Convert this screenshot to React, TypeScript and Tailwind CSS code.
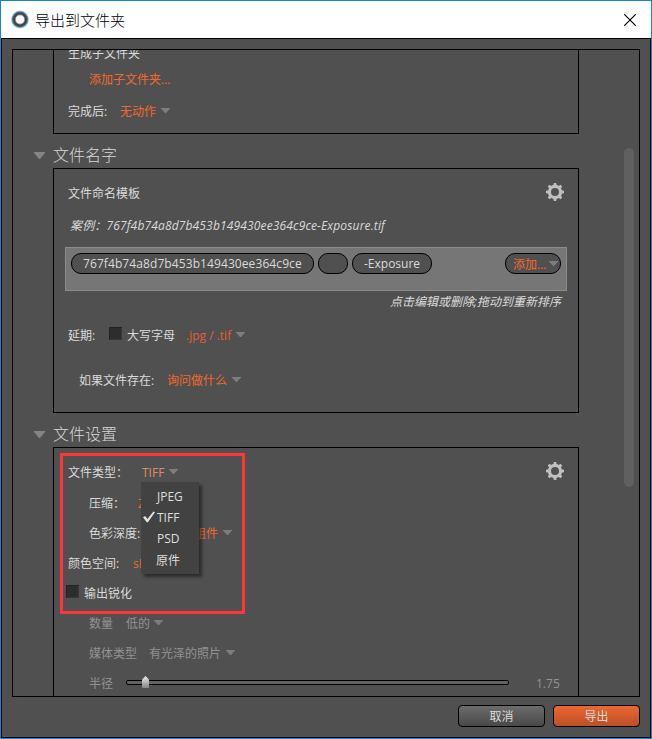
import type { ReactNode } from "react";

function Arrow({ className = "mb-[3px]" }: { className?: string }) {
  return (
    <svg className={`shrink-0 ${className}`} width="9" height="5" viewBox="0 0 9 5">
      <path d="M0 0H9V0.6L5 5H4L0 0.6Z" fill="#7d7d7d" />
    </svg>
  );
}

function Gear() {
  return (
    <svg className="mb-1 shrink-0" width="18" height="18" viewBox="-9 -9 18 18">
      <circle r="5.6" fill="none" stroke="#c0c0c0" strokeWidth="3.2" />
      {[0, 45, 90, 135, 180, 225, 270, 315].map((a) => (
        <path key={a} d="M-1.7 -6L-1.2 -9H1.2L1.7 -6Z" fill="#c0c0c0" transform={`rotate(${a})`} />
      ))}
    </svg>
  );
}

function Checkbox() {
  return (
    <span className="mb-[5px] h-[13px] w-[13px] shrink-0 border-t border-l border-[#222] bg-[#2d2d2d] shadow-[inset_-1px_-1px_1px_#3a3a3a]" />
  );
}

function Row({ className = "", children }: { className?: string; children: ReactNode }) {
  return <div className={`flex items-center ${className}`}>{children}</div>;
}

function Heading({ children }: { children: ReactNode }) {
  return (
    <div className="flex h-[34px] shrink-0 items-center pt-2 pl-[21px]">
      <svg width="11" height="7" viewBox="0 0 11 7" className="mr-[8px] shrink-0">
        <path d="M0 0H11V1L6 7H5L0 1Z" fill="#848484" />
      </svg>
      <h2 className="text-[16px] leading-[20px] font-light text-[#d8d8d8]">{children}</h2>
    </div>
  );
}

function Pill({ className = "", children }: { className?: string; children?: ReactNode }) {
  return (
    <div
      className={`flex h-[21px] shrink-0 items-center rounded-[10px] border border-black bg-[#505050] ${className}`}
    >
      {children}
    </div>
  );
}

function FormatMenu() {
  return (
    <div className="absolute top-[34px] left-[87px] flex h-[92px] w-[58px] flex-col bg-[#424242] pt-1 text-[#dedede] shadow-[3px_3px_3px_rgba(0,0,0,0.45)]">
      <div className="flex h-[21px] items-center pl-4">JPEG</div>
      <div className="flex h-[21px] items-center pl-[2px]">
        <svg width="12" height="12" viewBox="0 0 12 12" className="mr-[2px] mb-[2px]">
          <path d="M0 6.3L2.2 5L4.4 8L10.4 0.6L12 1.3L4.9 11.3H3.7Z" fill="#e2e2e2" />
        </svg>
        TIFF
      </div>
      <div className="flex h-[21px] items-center pl-4">PSD</div>
      <div className="flex h-[22px] items-center pt-[2px] pl-[15px]">原件</div>
    </div>
  );
}

export default function App() {
  return (
    <div className="relative flex h-[739px] w-[652px] flex-col overflow-hidden border border-[#1883d7] bg-[#505050] font-['Open_Sans','Noto_Sans_CJK_SC',sans-serif] text-[12px] leading-[16px] whitespace-nowrap text-[#dadada]">
      <header className="flex h-[37px] shrink-0 items-center bg-white pr-[15px] pl-[10px]">
        <svg width="18" height="19" viewBox="0 0 18 19">
          <circle cx="9" cy="9.5" r="8.9" fill="#8fcbe0" />
          <circle cx="9" cy="9.5" r="7.9" fill="#4f6f7c" />
          <circle cx="9" cy="9.5" r="6.9" fill="#454247" />
          <circle cx="9" cy="9.5" r="4.9" fill="#aaa8a9" />
          <circle cx="9" cy="9.5" r="4" fill="#fff" />
        </svg>
        <h1 className="ml-[6px] text-[15px] leading-[20px] font-light text-black">导出到文件夹</h1>
        <svg className="ml-auto" width="12" height="12" viewBox="0 0 12 12">
          <path d="M0.3 0.3L11.7 11.7M11.7 0.3L0.3 11.7" stroke="#000" strokeWidth="1.1" />
        </svg>
      </header>

      <div className="flex min-h-0 flex-1 flex-col border border-black px-[10px] pt-[10px]">
        <main className="flex h-[648px] w-[628px] shrink-0 overflow-hidden border border-black">
          <div className="flex w-[566px] shrink-0 flex-col">
            <section className="ml-10 h-[84px] shrink-0 overflow-hidden border border-t-0 border-black pl-[14px]">
              <Row className="-mt-2 h-6">生成子文件夹</Row>
              <Row className="h-[26px] pt-[2px] pl-[21px] text-[#f2682c]">添加子文件夹...</Row>
              <Row className="h-[38px] pt-[2px]">
                <span className="w-[52px]">完成后:</span>
                <span className="w-10 text-[#f2682c]">无动作</span>
                <Arrow className="mb-[3px] ml-px" />
              </Row>
            </section>

            <Heading>文件名字</Heading>
            <section className="ml-10 h-[245px] shrink-0 border border-black">
              <Row className="h-12 justify-between px-[14px] pt-[2px]">
                <span>文件命名模板</span>
                <Gear />
              </Row>
              <Row className="h-[18px] pl-4 tracking-[0.15px] italic">
                案例：767f4b74a8d7b453b149430ee364c9ce-Exposure.tif
              </Row>
              <div className="mt-3 ml-[11px] flex h-11 w-[502px] items-start border border-[#8b8b8b] bg-[#767676] px-[5px] pt-[5px]">
                <Pill className="w-[243px] pl-[11px] tracking-[0.09px]">
                  767f4b74a8d7b453b149430ee364c9ce
                </Pill>
                <Pill className="ml-1 w-[30px]" />
                <Pill className="ml-1 w-[80px] pl-[11px]">-Exposure</Pill>
                <Pill className="ml-auto w-[56px] pt-[2px] pl-[7px] text-[#f2682c]">
                  <span className="w-9">添加...</span>
                  <Arrow className="mb-[2px]" />
                </Pill>
              </div>
              <Row className="h-5 justify-end pt-[2px] pr-[17px] italic">点击编辑或删除;拖动到重新排序</Row>
              <Row className="h-12 pt-[2px] pl-[14px]">
                <span className="w-[41px]">延期:</span>
                <Checkbox />
                <span className="ml-[5px] w-[59px]">大写字母</span>
                <span className="w-[50px] text-[#e0602e]">.jpg / .tif</span>
                <Arrow />
              </Row>
              <Row className="h-[42px] pt-[2px] pl-[25px]">
                <span className="w-[88px]">如果文件存在:</span>
                <span className="w-[65px] text-[#f2682c]">询问做什么</span>
                <Arrow />
              </Row>
            </section>

            <Heading>文件设置</Heading>
            <section className="relative ml-10 h-[260px] shrink-0 border border-black pt-[10px]">
              <Row className="h-[30px] justify-between px-[14px]">
                <div className="flex items-center">
                  <span className="w-[74px]">文件类型：</span>
                  <span className="w-[27px] text-[#e28a68]">TIFF</span>
                  <Arrow />
                </div>
                <Gear />
              </Row>
              <Row className="h-[30px] pt-[2px] pl-[35px]">
                <span className="w-[49px]">压缩：</span>
                <span className="text-[#f2682c]">ZIP</span>
              </Row>
              <Row className="h-[30px] pt-[2px] pl-[35px]">
                <span className="w-[56px]">色彩深度:</span>
                <span className="w-[78px] pr-[5px] text-right text-[#f2682c]">8位/组件</span>
                <Arrow />
              </Row>
              <Row className="h-[30px] pt-[2px] pl-[14px]">
                <span className="w-[65px]">颜色空间:</span>
                <span className="text-[#f2682c]">sRGB</span>
              </Row>
              <Row className="h-[30px] pt-[2px] pl-3">
                <Checkbox />
                <span className="ml-[5px]">输出锐化</span>
              </Row>
              <Row className="h-[30px] pt-[2px] pl-[35px] text-[#929292]">
                <span className="w-[37px]">数量</span>
                <span className="w-[28px]">低的</span>
                <Arrow />
              </Row>
              <Row className="h-[30px] pt-[2px] pl-[35px] text-[#929292]">
                <span className="w-[60px]">媒体类型</span>
                <span className="w-[77px]">有光泽的照片</span>
                <Arrow />
              </Row>
              <Row className="h-[30px] pt-[2px] pl-[35px] text-[#929292]">
                <span className="w-[37px]">半径</span>
                <div className="relative mb-[3px] h-[5px] w-[383px] rounded-[2px] border border-black bg-[#626262]">
                  <svg className="absolute -top-[5px] left-[15px]" width="7" height="12" viewBox="0 0 7 12">
                    <defs>
                      <linearGradient id="thumb" x1="0" y1="0" x2="0" y2="1">
                        <stop offset="0" stopColor="#ededed" />
                        <stop offset="1" stopColor="#858585" />
                      </linearGradient>
                    </defs>
                    <path d="M3.5 0L7 3.5V12H0V3.5Z" fill="url(#thumb)" />
                  </svg>
                </div>
                <span className="ml-[27px]">1.75</span>
              </Row>
              <FormatMenu />
              <div className="pointer-events-none absolute top-[5px] left-[6px] h-[161px] w-[185px] border-3 border-[#ff3636]" />
            </section>
          </div>
          <div className="mt-[98px] ml-[45px] h-[339px] w-[10px] shrink-0 rounded-full bg-[#606060]" />
        </main>

        <footer className="flex shrink-0 justify-end gap-2 pt-2">
          <button className="h-[22px] w-[87px] rounded-[4px] border border-black bg-linear-to-b from-[#6c6c6c] to-[#494949] pt-[2px] leading-[18px]">
            取消
          </button>
          <button className="h-[22px] w-[87px] rounded-[4px] border border-black bg-linear-to-b from-[#ed6832] to-[#bb5028] pt-[2px] leading-[18px]">
            导出
          </button>
        </footer>
      </div>
    </div>
  );
}
